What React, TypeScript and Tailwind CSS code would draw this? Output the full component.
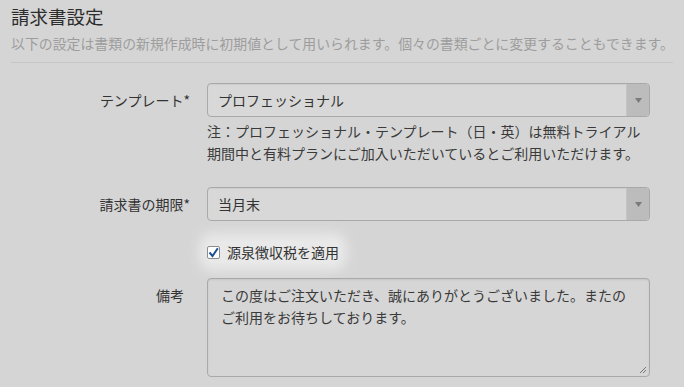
import React from "react";

// 請求書設定フォーム
const FONT = "font-['Noto_Sans_CJK_JP','Noto_Sans',sans-serif]";

function SelectBox({ value }: { value: string }) {
  return (
    <div className="flex h-[34px] w-[443px] rounded-[4px] border border-[#a9a9a9] bg-[#d8d8d8] shadow-[inset_0_1px_1px_rgba(0,0,0,0.05)]">
      <div className="flex flex-1 items-center pl-[10px] text-[14px] text-[#333]">{value}</div>
      <div className="flex w-[23px] items-center justify-center rounded-r-[3px] border-l border-[#c4c4c4] bg-[#bcbcbc]">
        <svg width="7" height="5" viewBox="0 0 7 5">
          <path d="M0 0h7L3.5 5z" fill="#7a7a7a" />
        </svg>
      </div>
    </div>
  );
}

export default function App() {
  return (
    <div className={`h-[387px] w-[684px] overflow-hidden bg-[#d5d5d5] ${FONT}`}>
      <div className="px-[11px] pt-[4px]">
        <h2 className="text-[18.5px] leading-[24px] text-[#2c2c2c]">請求書設定</h2>
        <p className="mt-[5px] whitespace-nowrap text-[13.9px] leading-[20px] text-[#9d9d9d]">
          以下の設定は書類の新規作成時に初期値として用いられます。個々の書類ごとに変更することもできます。
        </p>
        <div className="mt-[9px] border-t border-[#c6c6c6]" />
      </div>

      <div className="mt-[20px] grid grid-cols-[190px_443px] gap-x-[17px] text-[14px] text-[#333]">
        <div className="flex h-[34px] items-center justify-end">テンプレート*</div>
        <div>
          <SelectBox value="プロフェッショナル" />
          <p className="mt-[3px] leading-[22px] text-[#3a3a3a]">
            注：プロフェッショナル・テンプレート（日・英）は無料トライアル
            <br />
            期間中と有料プランにご加入いただいているとご利用いただけます。
          </p>
        </div>

        <div className="mt-[23px] flex h-[34px] items-center justify-end">請求書の期限*</div>
        <div className="mt-[23px]">
          <SelectBox value="当月末" />
        </div>

        <div />
        <div className="mt-[20px]">
          <label className="inline-flex h-[22px] items-center gap-[7px] rounded-md bg-[#e9e9e9] shadow-[0_0_12px_8px_#e9e9e9]">
            <span className="flex h-[13px] w-[13px] items-center justify-center rounded-[2px] border border-[#8c8c8c] bg-white">
              <svg width="11" height="11" viewBox="0 0 11 11">
                <path d="M1.5 5.5l3 3.5L9.8 1.3" fill="none" stroke="#1f4f95" strokeWidth="2" />
              </svg>
            </span>
            <span>源泉徴収税を適用</span>
          </label>
        </div>

        <div className="mt-[15px] pr-[6px] pt-[6px] text-right leading-[22px]">備考</div>
        <div className="mt-[15px]">
          <div className="relative h-[99px] w-[443px] rounded-[4px] border border-[#a9a9a9] bg-[#d6d6d6] px-[13px] pt-[5px] leading-[22px] text-[#3a3a3a] shadow-[inset_0_1px_2px_rgba(0,0,0,0.08)]">
            この度はご注文いただき、誠にありがとうございました。またの
            <br />
            ご利用をお待ちしております。
            <svg className="absolute bottom-[2px] right-[2px]" width="8" height="8" viewBox="0 0 8 8">
              <path d="M7 1L1 7M7 4L4 7" stroke="#777" strokeWidth="1" />
            </svg>
          </div>
        </div>
      </div>
    </div>
  );
}
